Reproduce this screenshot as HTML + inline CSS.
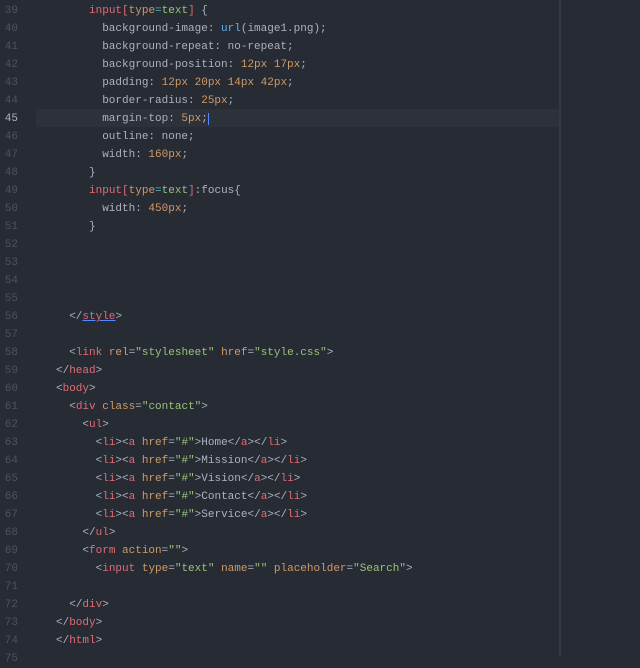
<!DOCTYPE html><html><head><style>
body{margin:0;width:640px;height:656px;background:#272b34;overflow:hidden;font-family:"Liberation Mono",monospace;font-size:11px;color:#abb2bf}
.l{position:absolute;left:0;height:18px;line-height:18px;width:640px;white-space:pre}
.n{position:absolute;left:0;width:18px;text-align:right;color:#4b5263}
.c{position:absolute;left:56px}
.t{color:#e06c75}.a{color:#d19a66}.s{color:#98c379}.f{color:#61afef}.p{color:#abb2bf}.k{color:#56b6c2}
</style></head><body>
<div style="position:absolute;left:559px;top:0;width:2px;height:656px;background:#333944"></div>
<div style="position:absolute;left:36px;top:109px;width:523px;height:18px;background:#2c313a"></div>
<div id="w"></div>
<script>
const L=[
[39,'     <span class=t>input</span><span class=t>[</span><span class=a>type</span><span class=k>=</span><span class=s>text</span><span class=t>]</span> {'],
[40,'       background-image: <span class=f>url</span>(image1.png);'],
[41,'       background-repeat: no-repeat;'],
[42,'       background-position: <span class=a>12px 17px</span>;'],
[43,'       padding: <span class=a>12px 20px 14px 42px</span>;'],
[44,'       border-radius: <span class=a>25px</span>;'],
[45,'       margin-top: <span class=a>5px</span>;<span style="border-left:1px solid #528bff"></span>'],
[46,'       outline: none;'],
[47,'       width: <span class=a>160px</span>;'],
[48,'     }'],
[49,'     <span class=t>input</span><span class=t>[</span><span class=a>type</span><span class=k>=</span><span class=s>text</span><span class=t>]</span>:focus{'],
[50,'       width: <span class=a>450px</span>;'],
[51,'     }'],
[52,''],[53,''],[54,''],[55,''],
[56,'  &lt;/<span class=t style="text-decoration:underline;text-decoration-color:#528bff">style</span>&gt;'],
[57,''],
[58,'  &lt;<span class=t>link</span> <span class=a>rel</span>=<span class=s>"stylesheet"</span> <span class=a>href</span>=<span class=s>"style.css"</span>&gt;'],
[59,'&lt;/<span class=t>head</span>&gt;'],
[60,'&lt;<span class=t>body</span>&gt;'],
[61,'  &lt;<span class=t>div</span> <span class=a>class</span>=<span class=s>"contact"</span>&gt;'],
[62,'    &lt;<span class=t>ul</span>&gt;'],
[63,'      &lt;<span class=t>li</span>&gt;&lt;<span class=t>a</span> <span class=a>href</span>=<span class=s>"#"</span>&gt;Home&lt;/<span class=t>a</span>&gt;&lt;/<span class=t>li</span>&gt;'],
[64,'      &lt;<span class=t>li</span>&gt;&lt;<span class=t>a</span> <span class=a>href</span>=<span class=s>"#"</span>&gt;Mission&lt;/<span class=t>a</span>&gt;&lt;/<span class=t>li</span>&gt;'],
[65,'      &lt;<span class=t>li</span>&gt;&lt;<span class=t>a</span> <span class=a>href</span>=<span class=s>"#"</span>&gt;Vision&lt;/<span class=t>a</span>&gt;&lt;/<span class=t>li</span>&gt;'],
[66,'      &lt;<span class=t>li</span>&gt;&lt;<span class=t>a</span> <span class=a>href</span>=<span class=s>"#"</span>&gt;Contact&lt;/<span class=t>a</span>&gt;&lt;/<span class=t>li</span>&gt;'],
[67,'      &lt;<span class=t>li</span>&gt;&lt;<span class=t>a</span> <span class=a>href</span>=<span class=s>"#"</span>&gt;Service&lt;/<span class=t>a</span>&gt;&lt;/<span class=t>li</span>&gt;'],
[68,'    &lt;/<span class=t>ul</span>&gt;'],
[69,'    &lt;<span class=t>form</span> <span class=a>action</span>=<span class=s>""</span>&gt;'],
[70,'      &lt;<span class=t>input</span> <span class=a>type</span>=<span class=s>"text"</span> <span class=a>name</span>=<span class=s>""</span> <span class=a>placeholder</span>=<span class=s>"Search"</span>&gt;'],
[71,''],
[72,'  &lt;/<span class=t>div</span>&gt;'],
[73,'&lt;/<span class=t>body</span>&gt;'],
[74,'&lt;/<span class=t>html</span>&gt;'],
[75,'']];
let h='';L.forEach((x,i)=>{h+='<div class=l style="top:'+(2+i*18)+'px"><span class=n'+(x[0]==45?' style="color:#abb2bf"':'')+'>'+x[0]+'</span><span class=c>'+x[1]+'</span></div>'});
document.getElementById('w').innerHTML=h;
</script>
</body></html>
